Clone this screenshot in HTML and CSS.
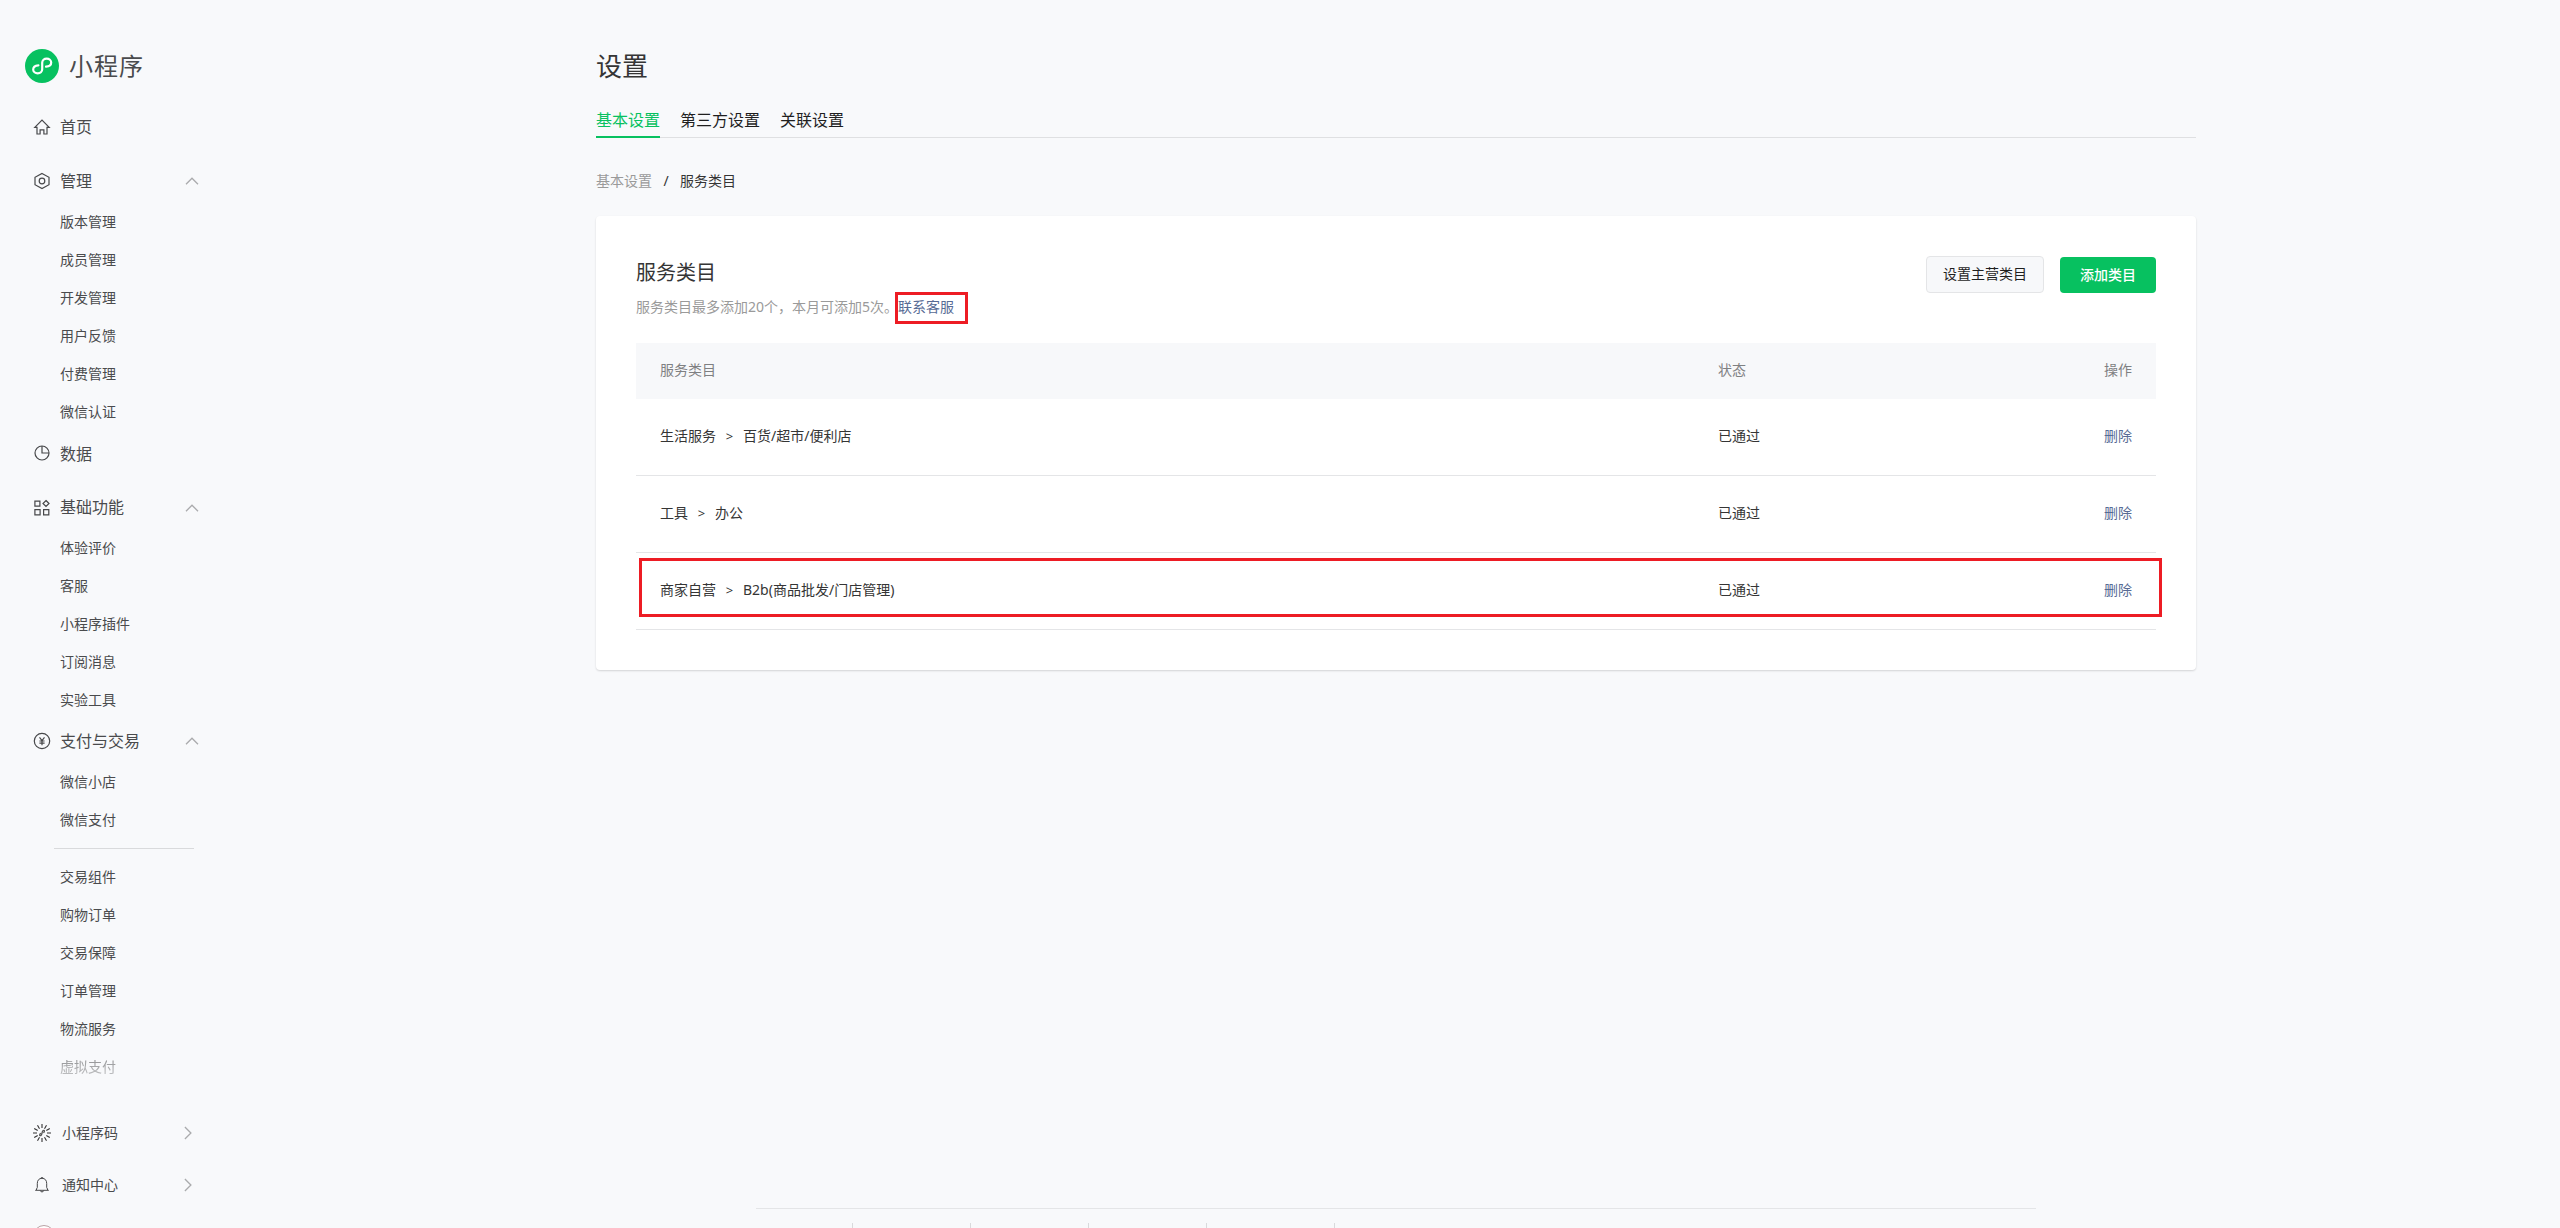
FILE: index.html
```html
<!DOCTYPE html>
<html lang="zh-CN">
<head>
<meta charset="utf-8">
<title>小程序 - 设置</title>
<link rel="stylesheet" href="styles.css">
</head>
<body>
<div class="page">
  <aside class="sidebar">
    <div class="brand">
      <svg width="34" height="34" viewBox="0 0 34 34"><circle cx="17" cy="17" r="17" fill="#07c160"/><path d="M13.400 16.300C10.600 16.500 8.200 18 8.200 20.500c0 2.200 2 3.900 4.500 3.900 2.600 0 4.500-1.700 4.500-4.100v-6.600c0-2.400 1.900-4.100 4.500-4.100 2.500 0 4.500 1.700 4.500 3.900 0 2.500-2.200 4-5.200 4.200" fill="none" stroke="#fff" stroke-width="2.200" stroke-linecap="round"/></svg>
      <span>小程序</span>
    </div>
    <nav class="menu">
      <a class="head"><svg class="icon" viewBox="0 0 16 16"><path d="M.8 8.300 8 1l7.200 7.300H13V15H9.900v-4.200H6.100V15H3V8.300z"/></svg><span>首页</span></a>
      <a class="head gap"><svg class="icon" viewBox="0 0 16 16"><path d="M8 .5l7 3.800v7.400L8 15.500 1 11.700V4.300z"/><circle cx="8" cy="8" r="2.800"/></svg><span>管理</span><svg class="up" viewBox="0 0 14 8"><path d="M1 7.200 7 1.200l6 6"/></svg></a>
      <ul class="subs"><li>版本管理</li><li>成员管理</li><li>开发管理</li><li>用户反馈</li><li>付费管理</li><li>微信认证</li></ul>
      <a class="head data"><svg class="icon" viewBox="0 0 16 16"><circle cx="8" cy="7" r="7"/><path d="M8 0v7h7"/></svg><span>数据</span></a>
      <a class="head gap basic"><svg class="icon" viewBox="0 0 16 16"><path d="M.9 1.100h5v5h-5zM.9 9.600h5.200v5.200H.9zM9.600 9.600h5.200v5.200H9.600zM12 .5l3 3-3 3-3-3z"/></svg><span>基础功能</span><svg class="up" viewBox="0 0 14 8"><path d="M1 7.200 7 1.200l6 6"/></svg></a>
      <ul class="subs"><li>体验评价</li><li>客服</li><li>小程序插件</li><li>订阅消息</li><li>实验工具</li></ul>
      <a class="head"><svg class="icon" viewBox="0 0 16 16"><circle cx="8" cy="8" r="7.700"/><path d="M5.500 4.300 8 7.500l2.500-3.200M8 7.500v4.800M5.400 8h5.200M5.400 10.200h5.200"/></svg><span>支付与交易</span><svg class="up" viewBox="0 0 14 8"><path d="M1 7.200 7 1.200l6 6"/></svg></a>
      <ul class="subs"><li>微信小店</li><li>微信支付</li></ul>
      <div class="rule"></div>
      <ul class="subs"><li>交易组件</li><li>购物订单</li><li>交易保障</li><li>订单管理</li><li>物流服务</li><li class="fading">虚拟支付</li></ul>
    </nav>
    <div class="tools">
      <a class="tool"><svg class="rays" viewBox="0 0 18 18"><g fill="none" stroke="#333" stroke-width="1.100"><path d="M9 0v4M9 14v4M0 9h4M14 9h4M4.500 1.200l2 3.500M11.500 13.300l2 3.500M1.200 4.500l3.500 2M13.300 11.500l3.500 2M13.500 1.200l-2 3.500M6.500 13.300l-2 3.500M16.800 4.500l-3.500 2M4.700 11.500l-3.500 2"/><path stroke="#555" stroke-width="1.300" d="M8 9.300c-2.200.8-1.400 3 .1 2.200 1.100-.6.700-3.900 1.800-4.800 1.500-1 2.400 1.300.4 2"/></g></svg><span>小程序码</span><svg class="right" viewBox="0 0 8 14"><path d="M.9 1l6 6-6 6"/></svg></a>
      <a class="tool"><svg class="icon bell" viewBox="0 0 16 16"><path d="M1.200 13.300h13.600M2.500 13V12l.8-1.500V6.500C3.300 3.300 5 1.300 8 1.300s4.700 2 4.700 5.200v4l.8 1.500v1M6.300 13.500c.2 1.900 3.200 1.900 3.400 0M7.300 1.200V.6h1.400v.6"/></svg><span>通知中心</span><svg class="right" viewBox="0 0 8 14"><path d="M.9 1l6 6-6 6"/></svg></a>
      <a class="tool last"><span class="avatar"></span></a>
    </div>
  </aside>

  <main class="main">
    <h1>设置</h1>
    <div class="tabs"><a class="tab active">基本设置</a><a class="tab">第三方设置</a><a class="tab">关联设置</a></div>
    <div class="crumbs"><span class="muted">基本设置</span><span class="slash">/</span><span>服务类目</span></div>
    <section class="card">
      <header class="card-head">
        <div>
          <h2>服务类目</h2>
          <p>服务类目最多添加20个，本月可添加5次。<a class="contact">联系客服<i class="mark mark-link"></i></a></p>
        </div>
        <div class="buttons"><button class="btn plain">设置主营类目</button><button class="btn primary">添加类目</button></div>
      </header>
      <div class="table">
        <div class="row thead"><span>服务类目</span><span>状态</span><span class="act">操作</span></div>
        <div class="row"><span>生活服务<b>&gt;</b>百货/超市/便利店</span><span>已通过</span><a class="act">删除</a></div>
        <div class="row"><span>工具<b>&gt;</b>办公</span><span>已通过</span><a class="act">删除</a></div>
        <div class="row"><span>商家自营<b>&gt;</b>B2b(商品批发/门店管理)</span><span>已通过</span><a class="act">删除</a><i class="mark mark-row"></i></div>
      </div>
    </section>
    <footer class="footer"><i></i><i></i><i></i><i></i><i class="wide"></i></footer>
  </main>
</div>
</body>
</html>
```
FILE: styles.css
```css
* { box-sizing: border-box; }
html, body { height: 1228px; overflow: hidden; }
body {
  margin: 0;
  background: #f8f9fb;
  color: #353535;
  font: 14px/20px "Noto Sans", "Noto Sans CJK SC", sans-serif;
}
h1, h2, p, ul { margin: 0; padding: 0; font-weight: 400; }
ul { list-style: none; }
.page { display: flex; height: 1228px; overflow: hidden; }

.sidebar { width: 220px; height: 1228px; overflow: hidden; flex: none; display: flex; flex-direction: column; color: #4a4b4d; }
.brand { display: flex; align-items: center; gap: 10px; height: 34px; flex: none; margin: 49px 0 0 25px; font-size: 24px; letter-spacing: 1px; line-height: 34px; }
.menu { height: 1002px; padding-top: 22px; margin-bottom: 22px; flex: none; }
.head { display: flex; align-items: center; height: 44px; padding-left: 34px; font-size: 16px; }
.head span, .tool span { padding-bottom: 1px; }
.gap { margin-top: 10px; }
.data { margin-top: 1px; }
.basic { height: 43px; }
.icon { width: 16px; height: 16px; margin-right: 10px; fill: none; stroke: #47484a; stroke-width: 1.2; overflow: visible; flex: none; }
.up, .right { fill: none; stroke: #aaabad; stroke-width: 1.3; }
.up { width: 14px; height: 8px; margin: 0 21px 0 auto; }
.subs li { height: 38px; line-height: 37px; padding-left: 60px; }
.fading { -webkit-mask-image: linear-gradient(rgba(0,0,0,.65) 20%, rgba(0,0,0,.3) 75%); mask-image: linear-gradient(rgba(0,0,0,.65) 20%, rgba(0,0,0,.3) 75%); }
.rule { height: 1px; margin: 9px 26px 9px 54px; background: #d9dadc; }
.tools { flex: none; }
.tool { display: flex; align-items: center; height: 52px; padding-left: 33px; }
.rays { width: 18px; height: 18px; margin-right: 11px; overflow: visible; }
.bell { margin: 0 12px 0 1px; stroke-width: 1; }
.right { width: 8px; height: 14px; margin: 0 28px 0 auto; }
.last { height: 17px; padding-top: 14px; align-items: flex-start; overflow: hidden; }
.tool .avatar { width: 22px; height: 22px; flex: none; border: 1px solid #b9a3a6; border-radius: 50%; background: #fff; }

.main { width: 1604px; height: 1228px; padding: 0 2px; margin-left: 374px; overflow: hidden; flex: none; display: flex; flex-direction: column; }
h1 { margin-top: 48px; font-size: 26px; line-height: 36px; }
.tabs { display: flex; gap: 20px; height: 36px; margin-top: 18px; border-bottom: 1px solid #dfe0e2; font-size: 16px; line-height: 36px; color: #1f1f1f; }
.tab { height: 36px; }
.active { color: #07c160; border-bottom: 2px solid #07c160; }
.crumbs { display: flex; height: 20px; margin-top: 33px; line-height: 19px; }
.muted { color: #9a9a9a; }
.slash { width: 28px; text-align: center; }
.card { height: 454px; margin-top: 25px; padding: 40px; background: #fff; border-radius: 4px; box-shadow: 0 1px 2px rgba(0,0,0,.15); }
.card-head { display: flex; justify-content: space-between; height: 87px; }
h2 { height: 32px; font-size: 20px; line-height: 34px; }
p { margin-top: 9px; line-height: 19px; color: #9a9a9a; }
.contact { position: relative; color: #576b95; }
.buttons { display: flex; align-items: flex-end; gap: 16px; height: 37px; }
.btn { font: inherit; border-radius: 4px; padding: 0; }
.plain { width: 118px; height: 37px; padding-bottom: 2px; background: #f7f8fa; border: 1px solid #e4e5e7; color: #1f1f1f; }
.primary { width: 96px; height: 36px; background: #07c160; border: 0; color: #fff; font-weight: 500; }
.row { position: relative; display: grid; grid-template-columns: 1058px 1fr auto; align-items: center; height: 77px; padding: 0 24px 2px; border-bottom: 1px solid #e4e5e7; }
.thead { height: 56px; background: #f7f8fa; border: 0; color: #7f8082; }
.row b { display: inline-block; width: 27px; text-align: center; font-weight: 400; font-size: 13px; }
a.act { color: #576b95; }
.mark { position: absolute; border: 3px solid #ed1c24; }
.mark-link { left: -3px; top: -5px; width: 73px; height: 32px; }
.mark-row { left: 3px; top: 5px; width: 1523px; height: 59px; }
.footer { display: flex; width: 1280px; height: 20px; margin: 538px 160px 0; padding-top: 14px; border-top: 1px solid #e4e5e7; }
.footer i { width: 118px; height: 5px; border-right: 1px solid #d9dadc; }
.footer i:first-child { width: 97px; }
.footer .wide { width: 128px; }
```
